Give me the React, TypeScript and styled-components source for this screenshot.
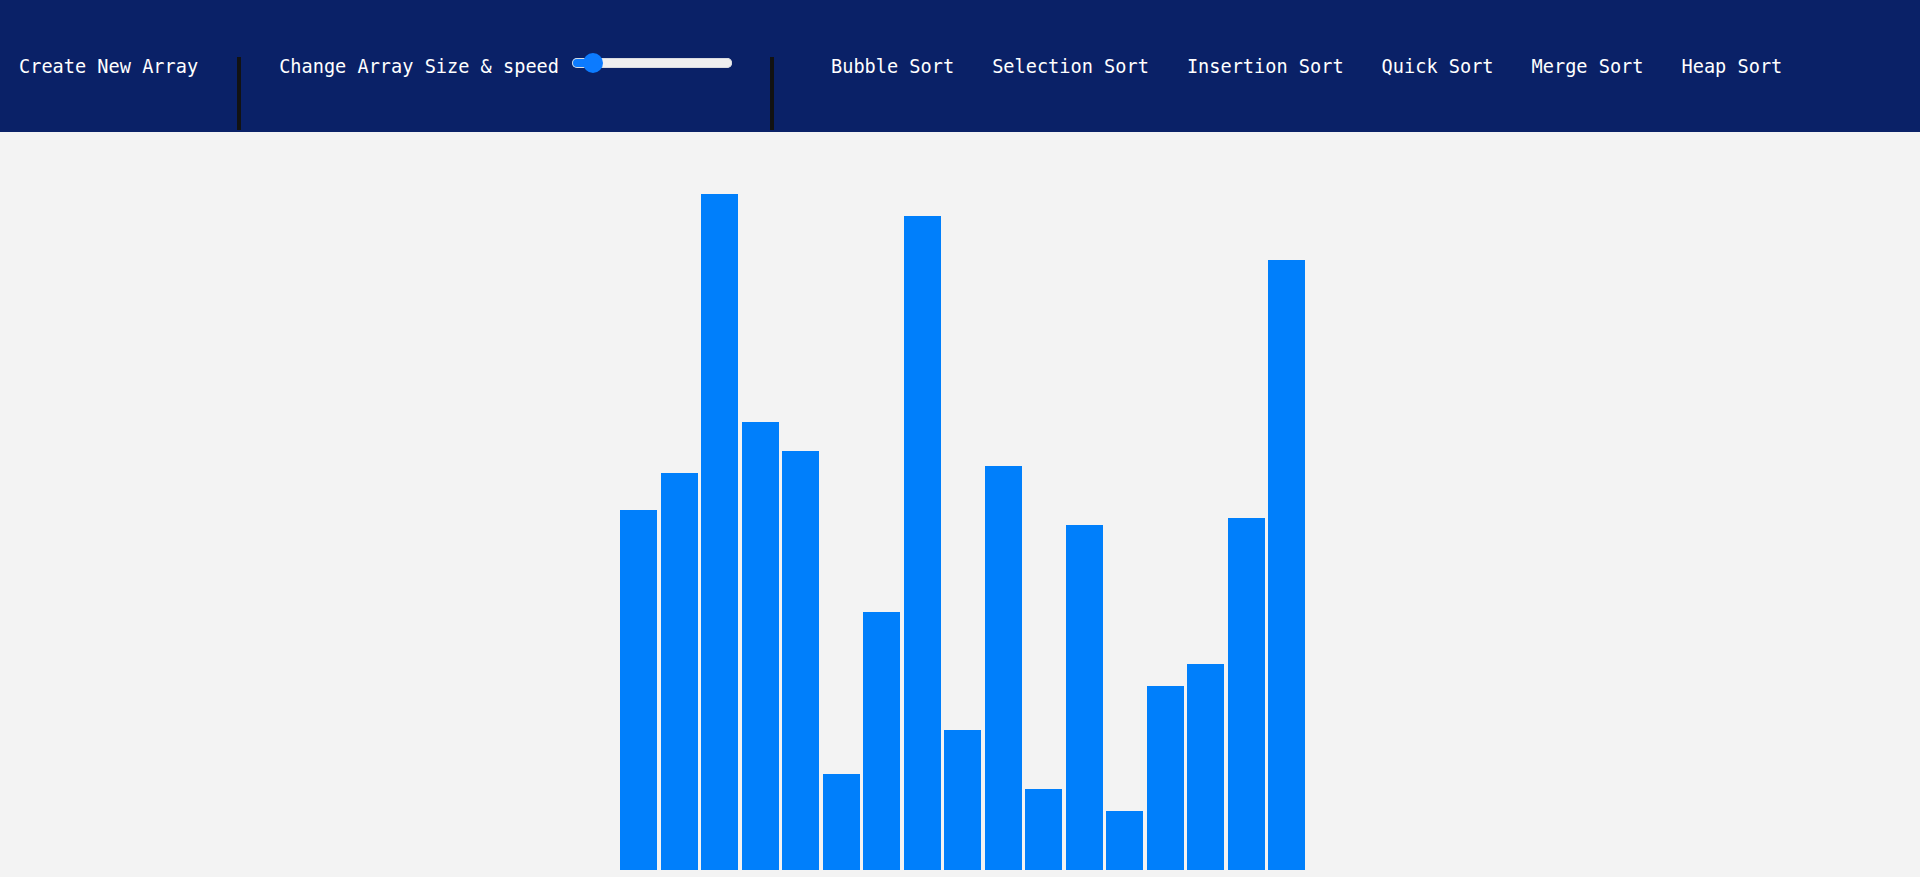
import React from "react";
import styled, { createGlobalStyle } from "styled-components";

const GlobalStyle = createGlobalStyle`
  html, body {
    margin: 0;
    padding: 0;
    background: #f3f3f3;
  }
  * { box-sizing: border-box; }
`;

const Page = styled.div`
  width: 1920px;
  height: 877px;
  overflow: hidden;
  display: flex;
  flex-direction: column;
  font-family: "DejaVu Sans Mono", "Liberation Mono", monospace;
`;

const Nav = styled.nav`
  height: 132px;
  flex: none;
  background: #0a2167;
  display: flex;
  align-items: flex-start;
  padding-top: 53px;
`;

const NavText = styled.span`
  color: #ffffff;
  font-size: 18.6px;
  line-height: 22px;
  padding-top: 3px;
  white-space: nowrap;
  cursor: pointer;
`;

const CreateItem = styled(NavText)`
  margin-left: 19px;
  margin-right: 39px;
`;

const Separator = styled.div`
  width: 4px;
  height: 73px;
  margin-top: 4px;
  background: #121212;
  flex: none;
`;

const SizeGroup = styled.div`
  display: flex;
  align-items: flex-start;
  gap: 13px;
  padding: 0 38px;
`;

const Range = styled.input.attrs({ type: "range" })<{ $fill: number }>`
  -webkit-appearance: none;
  appearance: none;
  width: 160px;
  height: 20px;
  margin: 0;
  background: transparent;
  outline: none;

  &::-webkit-slider-runnable-track {
    height: 10px;
    border-radius: 5px;
    background: linear-gradient(
      to right,
      #0c7bff 0,
      #0c7bff ${(p) => p.$fill}px,
      #efefef ${(p) => p.$fill}px,
      #efefef 100%
    );
    box-shadow: inset 0 0 0 1px #d9dbe0;
  }
  &::-webkit-slider-thumb {
    -webkit-appearance: none;
    appearance: none;
    width: 20px;
    height: 20px;
    border-radius: 50%;
    background: #0c7bff;
    border: none;
    margin-top: -5px;
  }
`;

const AlgoList = styled.div`
  display: flex;
  gap: 38px;
  padding-left: 57px;
`;

const Main = styled.main`
  flex: 1;
  display: flex;
  justify-content: center;
  align-items: flex-end;
  gap: 3.5px;
  padding-bottom: 7px;
  padding-left: 5px;
`;

const Bar = styled.div`
  width: 37px;
  background: #007ffb;
  flex: none;
`;

const heights = [360, 397, 676, 448, 419, 96, 258, 654, 140, 404, 81, 345, 59, 184, 206, 352, 610];
const algorithms = ["Bubble Sort", "Selection Sort", "Insertion Sort", "Quick Sort", "Merge Sort", "Heap Sort"];

export default function App() {
  const [value, setValue] = React.useState(8);
  const fill = 10 + (value / 100) * 140;
  return (
    <>
      <GlobalStyle />
      <Page>
        <Nav>
          <CreateItem>Create New Array</CreateItem>
          <Separator />
          <SizeGroup>
            <NavText>Change Array Size &amp; speed</NavText>
            <Range
              $fill={fill}
              min={0}
              max={100}
              value={value}
              onChange={(e) => setValue(Number(e.target.value))}
            />
          </SizeGroup>
          <Separator />
          <AlgoList>
            {algorithms.map((a) => (
              <NavText key={a}>{a}</NavText>
            ))}
          </AlgoList>
        </Nav>
        <Main>
          {heights.map((h, i) => (
            <Bar key={i} style={{ height: h }} />
          ))}
        </Main>
      </Page>
    </>
  );
}
